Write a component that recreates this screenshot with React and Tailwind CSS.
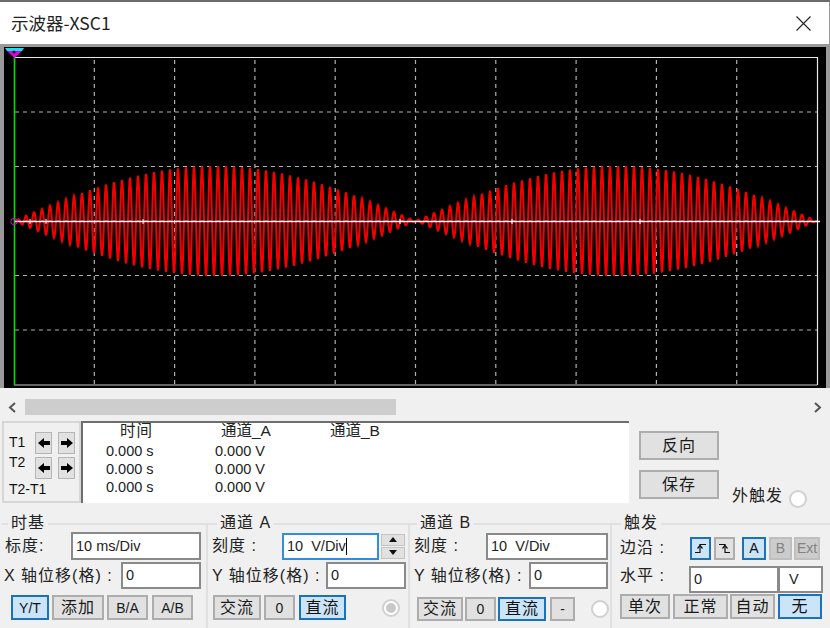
import React from "react";

const UI = { fontFamily: '"Liberation Sans","Noto Sans CJK SC",sans-serif' };

function wavePath() {
  const x0 = 14, x1 = 817, mid = 221, amp = 55, per = 8;
  let d = "";
  for (let x = x0; x <= x1; x += 0.5) {
    const t = x - x0;
    const env = Math.abs(Math.sin((Math.PI * t) / 401.5));
    const y = mid - amp * env * Math.sin((2 * Math.PI * t) / per - Math.PI / 2);
    d += (d ? "L" : "M") + x + " " + y.toFixed(1);
  }
  return d;
}

function Plot() {
  const vs = [94.3, 174.6, 254.9, 335.2, 415.5, 495.8, 576.1, 656.4, 736.7];
  const hs = [112, 166.5, 221, 275.5, 330];
  return (
    <div className="h-[341px] mx-1 bg-black shrink-0">
      <svg width="822" height="341" viewBox="4 47 822 341" className="block">
        {vs.map((x) => (
          <line key={x} x1={x} x2={x} y1="60" y2="385" stroke="#b0b0b0" strokeWidth="1.2" strokeDasharray="4 4" />
        ))}
        {hs.map((y) => (
          <line key={y} x1="15" x2="817" y1={y} y2={y} stroke="#b0b0b0" strokeWidth="1.2" strokeDasharray="4 4" />
        ))}
        <path d={wavePath()} fill="none" stroke="#f40000" strokeWidth="2" />
        <path d="M14 57.5H817.5V385" fill="none" stroke="#e8e8e8" strokeWidth="1.2" />
        <line x1="14" x2="817" y1="385" y2="385" stroke="#c8c8c8" strokeWidth="1" />
        <line x1="14" x2="820" y1="221.5" y2="221.5" stroke="#ffffff" strokeWidth="1.6" />
        {[30, 46, 143, 400, 512, 640].map((x) => (
          <line key={x} x1={x} x2={x} y1="219" y2="224" stroke="#ffffff" strokeWidth="1" />
        ))}
        <line x1="14.5" x2="14.5" y1="56" y2="385" stroke="#00e000" strokeWidth="1.6" />
        <polygon points="5,48 24,48 22,51 7,51" fill="#18e0f0" />
        <polygon points="7,51 22,51 14.5,58" fill="#e000e0" />
        <circle cx="14" cy="52" r="1.6" fill="#222" />
        <circle cx="14" cy="221.5" r="3.2" fill="none" stroke="#e000e0" strokeWidth="1" />
      </svg>
    </div>
  );
}

function Btn({ children, active, disabled, latin, className = "" }) {
  const c = active
    ? "bg-[#cce4f7] border-[#1b72b8] text-[#111]"
    : disabled
    ? "bg-[#cccccc] border-[#bfbfbf] text-[#838383]"
    : "bg-[#e1e1e1] border-[#adadad] text-[#1a1a1a]";
  const t = latin ? "text-[14px]" : "text-[16px] tracking-[1px]";
  return (
    <div className={`flex items-center justify-center border-2 leading-none shrink-0 ${t} ${c} ${className}`}>
      {children}
    </div>
  );
}

function Field({ children, focus, className = "" }) {
  return (
    <div
      className={`flex items-center bg-white border-2 pl-[3px] text-[14.5px] leading-none text-[#222] shrink-0 ${
        focus ? "border-[#2f8fdc]" : "border-[#8a8a8a]"
      } ${className}`}
    >
      {children}
    </div>
  );
}

function Group({ title, width, legendLeft, children }) {
  return (
    <div className={`relative h-[111px] border-t-2 border-r-2 border-[#e0e0e0] shrink-0 ${width}`}>
      <div className={`absolute -top-[12px] bg-[#f0f0f0] px-[3px] text-[16px] tracking-[1px] leading-5 text-[#222] ${legendLeft}`}>
        {title}
      </div>
      {children}
    </div>
  );
}

function Arrow({ dir }) {
  return (
    <svg width="12" height="12" viewBox="0 0 12 12">
      <polygon
        points={dir === "l" ? "0,6 6,1 6,4 12,4 12,8 6,8 6,11" : "12,6 6,1 6,4 0,4 0,8 6,8 6,11"}
        fill="#000"
      />
    </svg>
  );
}

function ArrowBtn({ dir }) {
  return (
    <div className="w-[17px] h-[22px] bg-[#e1e1e1] border border-[#b5b5b5] flex items-center justify-center">
      <Arrow dir={dir} />
    </div>
  );
}

function Radio({ filled }) {
  return (
    <div className="w-[18px] h-[18px] rounded-full bg-white border-2 border-[#d0d0d0] flex items-center justify-center shrink-0">
      {filled && <div className="w-[10px] h-[10px] rounded-full bg-[#c8c8c8]" />}
    </div>
  );
}

function Cursors() {
  return (
    <div className="w-[79px] h-[82px] border-2 border-[#d6d6d6] pl-[5px] pt-[7px] text-[14px] text-[#111] shrink-0">
      <div className="flex items-center h-[25px]">
        <span className="w-[26px]">T1</span>
        <div className="flex gap-[6px]">
          <ArrowBtn dir="l" />
          <ArrowBtn dir="r" />
        </div>
      </div>
      <div className="flex items-center h-[25px]">
        <span className="w-[26px] -translate-y-[5px]">T2</span>
        <div className="flex gap-[6px]">
          <ArrowBtn dir="l" />
          <ArrowBtn dir="r" />
        </div>
      </div>
      <div className="-mt-[1px] leading-5">T2-T1</div>
    </div>
  );
}

function Readout() {
  const row = "grid grid-cols-[109px_109px_1fr] h-[18px] items-center text-[14.5px] text-[#222] leading-none";
  return (
    <div className="w-[548px] h-[82px] bg-white border-t-2 border-l-2 border-[#6e6e6e] pl-[23px] shrink-0">
      <div className="grid grid-cols-[109px_109px_1fr] h-[19px] items-start text-[15.5px] text-[#222] leading-none">
        <span className="pl-[14px] tracking-[1px]">时间</span>
        <span className="pl-[6px]">通道_A</span>
        <span className="pl-[6px]">通道_B</span>
      </div>
      {[0, 1, 2].map((i) => (
        <div key={i} className={row}>
          <span>0.000 s</span>
          <span>0.000 V</span>
        </div>
      ))}
    </div>
  );
}

function EdgeIcon({ down }) {
  return (
    <svg width="13" height="13" viewBox="0 0 13 13" className={down ? "-scale-x-100" : ""}>
      <path d="M1 10.5H6V2.5H12" fill="none" stroke="#111" strokeWidth="1.2" />
      <path d="M3.5 6.5L6 3.5L8.5 6.5" fill="none" stroke="#111" strokeWidth="1.2" />
    </svg>
  );
}

function Label({ children, className = "" }) {
  return <span className={`text-[16px] tracking-[1px] leading-none text-[#222] whitespace-nowrap ${className}`}>{children}</span>;
}

export default function App() {
  return (
    <div className="w-[830px] h-[628px] flex flex-col bg-[#f0f0f0] overflow-hidden" style={UI}>
      <div className="h-[2px] bg-[#6b6b6b] shrink-0" />
      <div className="h-[42px] bg-white flex items-center justify-between pl-[11px] pr-[18px] shrink-0 border-r border-[#9a9a9a]">
        <span className="text-[17.5px] text-[#222]" style={{ fontFamily: '"Noto Sans CJK SC","Noto Sans",sans-serif' }}>
          示波器-XSC1
        </span>
        <svg width="15" height="15" viewBox="0 0 15 15">
          <path d="M0.5 0.5L14.5 14.5M14.5 0.5L0.5 14.5" stroke="#222" strokeWidth="1.1" />
        </svg>
      </div>
      <div className="h-[344px] bg-[#9a9a9a] pt-[3px] shrink-0">
        <Plot />
      </div>

      <div className="h-[9px] shrink-0" />
      <div className="h-[20px] flex items-center shrink-0 px-[8px]">
        <svg width="9" height="11" viewBox="0 0 9 11"><path d="M7 1L2 5.5L7 10" fill="none" stroke="#555" strokeWidth="2" /></svg>
        <div className="ml-[8px] w-[371px] h-[16px] bg-[#cdcdcd]" />
        <div className="flex-1" />
        <svg width="9" height="11" viewBox="0 0 9 11"><path d="M2 1L7 5.5L2 10" fill="none" stroke="#555" strokeWidth="2" /></svg>
      </div>

      <div className="h-[4px] shrink-0" />
      <div className="h-[84px] flex pl-[2px] shrink-0">
        <Cursors />
        <Readout />
        <div className="pl-[10px] pt-[10px] flex flex-col gap-[10px] shrink-0">
          <Btn className="w-[80px] h-[29px]">反向</Btn>
          <Btn className="w-[80px] h-[29px]">保存</Btn>
        </div>
        <div className="flex items-center gap-[6px] pl-[13px] self-end">
          <Label>外触发</Label>
          <div className="translate-y-[3px]"><Radio /></div>
        </div>
      </div>

      <div className="h-[18px] shrink-0" />
      <div className="flex pl-[2px] shrink-0">
        <Group title="时基" width="w-[206px]" legendLeft="left-[6px]">
          <div className="flex items-center h-[28px] mt-[7px] pl-[3px]">
            <Label className="w-[66px]">标度:</Label>
            <Field className="w-[130px] h-[28px]">10 ms/Div</Field>
          </div>
          <div className="flex items-center h-[27px] mt-[2px] pl-[2px]">
            <Label className="w-[117px]">X 轴位移(格) :</Label>
            <Field className="w-[80px] h-[27px]">0</Field>
          </div>
          <div className="flex mt-[6px] pl-[9px] gap-[3px]">
            <Btn latin active className="w-[38px] h-[25px]">Y/T</Btn>
            <Btn className="w-[52px] h-[25px]">添加</Btn>
            <Btn latin className="w-[41px] h-[25px]">B/A</Btn>
            <Btn latin className="w-[41px] h-[25px] ml-px">A/B</Btn>
          </div>
        </Group>

        <Group title="通道 A" width="w-[202px]" legendLeft="left-[9px]">
          <div className="flex items-center h-[28px] mt-[7px] pl-[4px]">
            <Label className="w-[70px]">刻度 :</Label>
            <Field focus className="w-[97px] h-[27px]">
              <span>10&nbsp; V/Div</span>
              <span className="w-px h-[17px] bg-black" />
            </Field>
            <div className="ml-[2px] flex flex-col gap-px w-[24px]">
              <div className="h-[12px] bg-[#e1e1e1] border border-[#c4c4c4] flex items-center justify-center">
                <svg width="8" height="5" viewBox="0 0 8 5"><polygon points="4,0 8,5 0,5" fill="#111" /></svg>
              </div>
              <div className="h-[12px] bg-[#e1e1e1] border border-[#c4c4c4] flex items-center justify-center">
                <svg width="8" height="5" viewBox="0 0 8 5"><polygon points="0,0 8,0 4,5" fill="#111" /></svg>
              </div>
            </div>
          </div>
          <div className="flex items-center h-[27px] mt-[2px] pl-[4px]">
            <Label className="w-[114px]">Y 轴位移(格) :</Label>
            <Field className="w-[80px] h-[27px]">0</Field>
          </div>
          <div className="flex items-center mt-[6px] pl-[5px] gap-[3px]">
            <Btn className="w-[48px] h-[25px]">交流</Btn>
            <Btn latin className="w-[31px] h-[25px]">0</Btn>
            <Btn active className="w-[47px] h-[25px] ml-px">直流</Btn>
            <div className="ml-[33px]"><Radio filled /></div>
          </div>
        </Group>

        <Group title="通道 B" width="w-[202px]" legendLeft="left-[7px]">
          <div className="flex items-center h-[28px] mt-[7px] pl-[4px]">
            <Label className="w-[72px]">刻度 :</Label>
            <Field className="w-[122px] h-[27px]">10&nbsp; V/Div</Field>
          </div>
          <div className="flex items-center h-[27px] mt-[2px] pl-[4px]">
            <Label className="w-[115px]">Y 轴位移(格) :</Label>
            <Field className="w-[79px] h-[27px]">0</Field>
          </div>
          <div className="flex items-center mt-[8px] pl-[7px] gap-[2px]">
            <Btn className="w-[46px] h-[24px]">交流</Btn>
            <Btn latin className="w-[31px] h-[24px]">0</Btn>
            <Btn active className="w-[48px] h-[24px]">直流</Btn>
            <Btn latin className="w-[25px] h-[24px] ml-[2px]">-</Btn>
            <div className="ml-[14px]"><Radio /></div>
          </div>
        </Group>

        <div className="relative h-[111px] border-t-2 border-[#e0e0e0] w-[218px] shrink-0">
          <div className="absolute -top-[12px] left-[9px] bg-[#f0f0f0] px-[3px] text-[16px] tracking-[1px] leading-5 text-[#222]">触发</div>
          <div className="flex items-center h-[24px] mt-[11px] pl-[8px]">
            <Label className="w-[70px]">边沿 :</Label>
            <Btn active className="w-[21px] h-[23px]"><EdgeIcon /></Btn>
            <Btn className="w-[21px] h-[23px] ml-[3px]"><EdgeIcon down /></Btn>
            <Btn latin active className="w-[24px] h-[23px] ml-[7px]">A</Btn>
            <Btn latin disabled className="w-[23px] h-[23px] ml-[3px]">B</Btn>
            <Btn latin disabled className="w-[26px] h-[23px] ml-[2px]">Ext</Btn>
          </div>
          <div className="flex items-center h-[27px] mt-[6px] pl-[8px]">
            <Label className="w-[69px] -translate-y-[4px]">水平 :</Label>
            <Field className="w-[90px] h-[27px]">0</Field>
            <Field className="w-[45px] h-[27px] -ml-[1px] pl-[9px]">V</Field>
          </div>
          <div className="flex mt-[1px] pl-[8px] gap-[3px]">
            <Btn className="w-[50px] h-[25px]">单次</Btn>
            <Btn className="w-[55px] h-[25px]">正常</Btn>
            <Btn className="w-[45px] h-[25px] -ml-px">自动</Btn>
            <Btn active className="w-[44px] h-[25px]">无</Btn>
          </div>
        </div>
      </div>
      <div className="flex-1 bg-[#f0f0f0]" />
      <div className="h-[2px] bg-[#6b6b6b] shrink-0" />
    </div>
  );
}
